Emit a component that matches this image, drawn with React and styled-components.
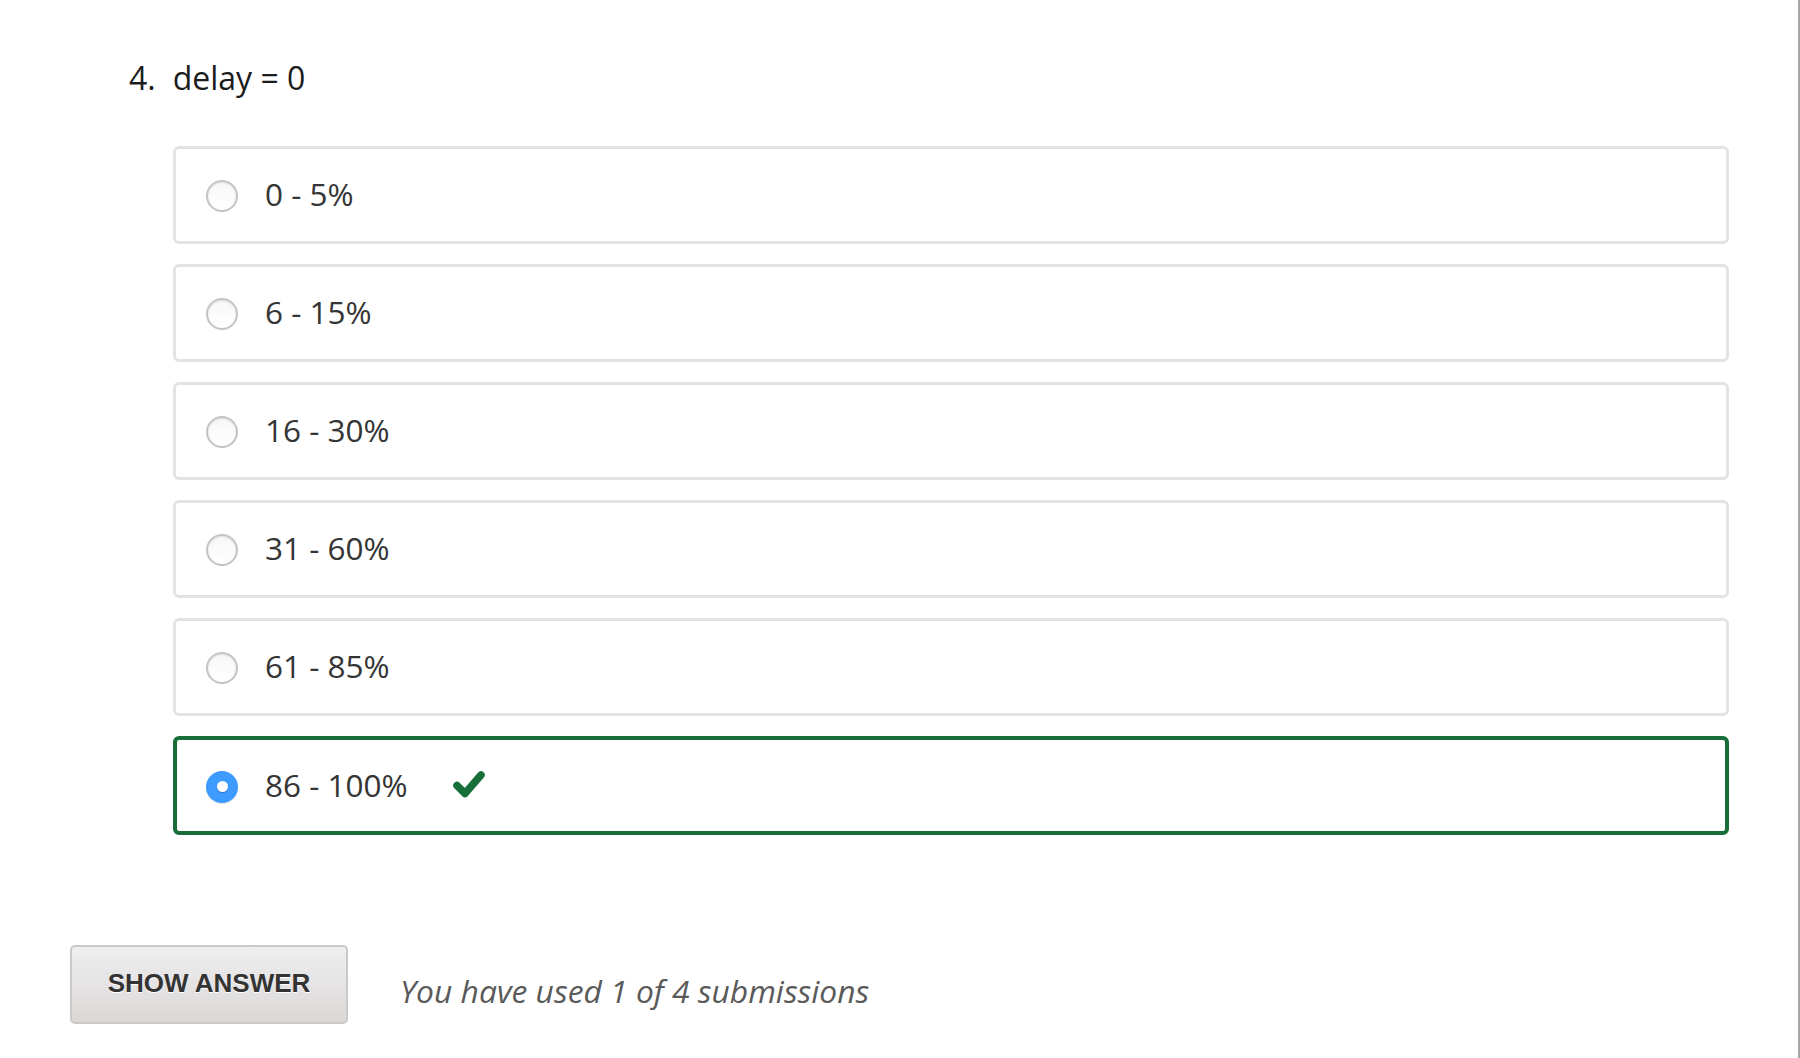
import React from "react";
import styled, { createGlobalStyle } from "styled-components";

const GlobalStyle = createGlobalStyle`
  html, body {
    margin: 0;
    padding: 0;
    background: #ffffff;
  }
  * {
    box-sizing: border-box;
  }
`;

const Page = styled.div`
  width: 1800px;
  height: 1058px;
  border-right: 2px solid #a7a7a7;
  padding: 54px 0 0 70px;
  font-family: "Open Sans", "Noto Sans", sans-serif;
  overflow: hidden;
`;

const Question = styled.h2`
  display: flex;
  gap: 17px;
  margin: 0 0 44px 59px;
  font-size: 32px;
  line-height: 48px;
  font-weight: 400;
  color: #1c1c1c;
`;

const Choices = styled.div`
  display: flex;
  flex-direction: column;
  gap: 20px;
  margin-left: 103px;
  width: 1556px;
`;

const Choice = styled.label`
  display: flex;
  align-items: center;
  height: ${(p) => (p.$correct ? "99px" : "98px")};
  padding-left: ${(p) => (p.$correct ? "29px" : "30px")};
  border: ${(p) => (p.$correct ? "4px solid #186e38" : "3px solid #e3e3e3")};
  border-radius: 6px;
  background: #fff;
`;

const Radio = styled.span`
  position: relative;
  flex: none;
  width: 32px;
  height: 32px;
  margin-top: 2px;
  border-radius: 50%;
  ${(p) =>
    p.$checked
      ? `
    background: #3d9bff;
    box-shadow: 0 1px 1px rgba(0, 0, 0, 0.12);
    &::after {
      content: "";
      position: absolute;
      left: 10.5px;
      top: 10.5px;
      width: 11px;
      height: 11px;
      border-radius: 50%;
      background: #fff;
      box-shadow: 0 1px 1px rgba(0, 0, 0, 0.25);
    }
  `
      : `
    border: 2px solid #c4c4c4;
    background: linear-gradient(#f7f7f7, #ffffff);
    box-shadow: inset 0 1px 2px rgba(0, 0, 0, 0.1);
  `}
`;

const ChoiceText = styled.span`
  margin-left: 27px;
  margin-top: -2px;
  font-size: 31.5px;
  line-height: 44px;
  color: #353535;
`;

const Check = styled.svg`
  margin-left: 44px;
  margin-top: -4px;
  flex: none;
`;

const Footer = styled.div`
  display: flex;
  align-items: center;
  gap: 52px;
  margin-top: 110px;
`;

const ShowAnswer = styled.button`
  width: 278px;
  height: 79px;
  border: 2px solid #cdc8c8;
  border-radius: 5px;
  background: linear-gradient(#efefef, #dbd7d7);
  font-family: "Liberation Sans", Arial, sans-serif;
  font-weight: 700;
  font-size: 26px;
  color: #333;
  text-shadow: 0 1px 0 #fff;
  padding: 0 0 2px 0;
`;

const Submissions = styled.span`
  margin-top: 11px;
  font-size: 31.8px;
  font-style: italic;
  color: #5a5a5a;
`;

const options = ["0 - 5%", "6 - 15%", "16 - 30%", "31 - 60%", "61 - 85%", "86 - 100%"];

const CheckMark = () => (
  <Check width="34" height="30" viewBox="0 0 34 30">
    <polyline
      points="5,16.5 13,24.5 29,6"
      fill="none"
      stroke="#186e38"
      strokeWidth="7.5"
      strokeLinecap="round"
      strokeLinejoin="round"
    />
  </Check>
);

export default function App() {
  const selected = options.length - 1;
  return (
    <Page>
      <GlobalStyle />
      <Question>
        <span>4.</span>
        <span>delay = 0</span>
      </Question>
      <Choices>
        {options.map((opt, i) => (
          <Choice key={opt} $correct={i === selected}>
            <Radio $checked={i === selected} />
            <ChoiceText>{opt}</ChoiceText>
            {i === selected && <CheckMark />}
          </Choice>
        ))}
      </Choices>
      <Footer>
        <ShowAnswer>SHOW ANSWER</ShowAnswer>
        <Submissions>You have used 1 of 4 submissions</Submissions>
      </Footer>
    </Page>
  );
}
